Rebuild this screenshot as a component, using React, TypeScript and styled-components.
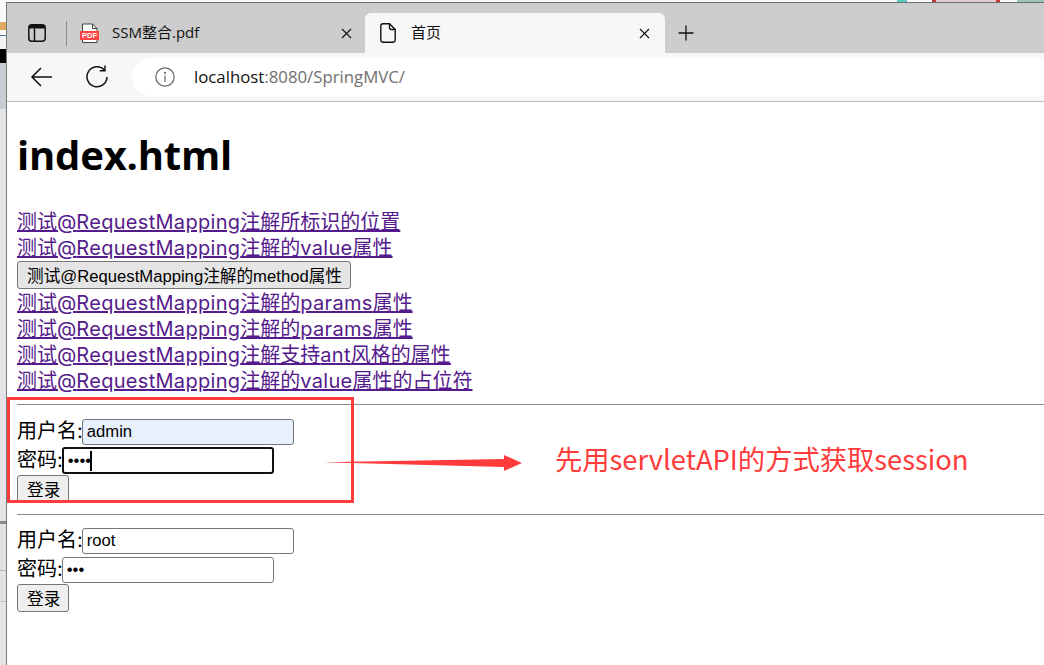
import React from "react";
import styled, { createGlobalStyle } from "styled-components";
import { Plus, X } from "lucide-react";

const GlobalStyle = createGlobalStyle`
  html, body {
    margin: 0;
    padding: 0;
    background: #fff;
  }
`;

const Screen = styled.div`
  position: relative;
  width: 1044px;
  height: 665px;
  overflow: hidden;
  display: flex;
  flex-direction: column;
  background: #fff;
`;

const TopStrip = styled.div`
  height: 2px;
  display: flex;
  background: #fafafa;
`;

const TopPiece = styled.div<{ $w: number; $c: string }>`
  width: ${(p) => p.$w}px;
  background: ${(p) => p.$c};
`;

const Main = styled.div`
  flex: 1;
  display: flex;
  min-height: 0;
`;

const LeftStrip = styled.div`
  width: 6px;
  display: flex;
  flex-direction: column;
  background: #e4e4e6;
`;

const Band = styled.div<{ $h: number; $c: string }>`
  height: ${(p) => p.$h}px;
  background: ${(p) => p.$c};
`;

const Window = styled.div`
  flex: 1;
  min-width: 0;
  display: flex;
  flex-direction: column;
  border-top: 1px solid #6f6f6f;
  border-left: 1px solid #7a7a7a;
  background: #fff;
`;

const TabStrip = styled.div`
  height: 50px;
  display: flex;
  align-items: flex-end;
  background: #cdcdcd;
  padding-left: 21px;
`;

const StripGroup = styled.div`
  height: 40px;
  display: flex;
  align-items: center;
`;

const Separator = styled.div`
  width: 1px;
  height: 25px;
  margin: 0 13px 0 20px;
  background: #8c8c8c;
`;

const TabTitle = styled.span`
  font: 15px "Open Sans", "Noto Sans CJK SC", sans-serif;
  color: #111;
  margin-left: 13px;
  padding-bottom: 3px;
  width: 226px;
  white-space: nowrap;
`;

const ActiveTab = styled.div`
  width: 300px;
  height: 40px;
  margin-left: 10px;
  box-sizing: border-box;
  padding: 0 12px 0 15px;
  display: flex;
  align-items: center;
  background: #f7f7f7;
  border-radius: 6px 6px 0 0;
`;

const ActiveTitle = styled(TabTitle)`
  flex: 1;
  width: auto;
  margin-left: 15px;
`;

const NewTab = styled.div`
  height: 40px;
  margin-left: 9px;
  display: flex;
  align-items: center;
  color: #111;
`;

const Toolbar = styled.div`
  height: 48px;
  display: flex;
  align-items: center;
  background: #f7f7f7;
  border-bottom: 1px solid #bdbdbd;
  padding-left: 23px;
`;

const ToolIcon = styled.div`
  width: 24px;
  height: 24px;
  margin-right: 31px;
  color: #111;
`;

const AddressBar = styled.div`
  flex: 1;
  height: 38px;
  margin-left: -8px;
  display: flex;
  align-items: center;
  background: #fff;
  border-radius: 19px 0 0 19px;
  padding-left: 23px;
`;

const Url = styled.div`
  margin-left: 19px;
  padding-bottom: 1px;
  font: 16.8px "Open Sans", sans-serif;
  color: #6f6f6f;
  white-space: nowrap;
`;

const Host = styled.span`
  color: #111;
`;

const Page = styled.div`
  flex: 1;
  padding: 0 0 0 10px;
  font: 20px/26px "Inter", "Noto Sans CJK SC", sans-serif;
  color: #000;
`;

const Title = styled.h1`
  margin: 26px 0 28px;
  font: bold 40px/54px "Open Sans", "Noto Sans CJK SC", sans-serif;
  letter-spacing: -0.2px;
`;

const PageLink = styled.a`
  display: block;
  height: 26px;
  line-height: 24px;
  color: #551a8b;
  text-decoration: underline;
  white-space: nowrap;
`;

const Latin = styled.span`
  letter-spacing: 0.3px;
`;

const NativeButton = styled.button`
  display: block;
  box-sizing: border-box;
  height: 28px;
  padding: 0 9px;
  font: 16.67px "Liberation Sans", "Noto Sans CJK SC", sans-serif;
  color: #000;
  background: #efefef;
  border: 1px solid #767676;
  border-radius: 3px;
  white-space: nowrap;
`;

const MethodButton = styled(NativeButton)`
  width: 334px;
  background: #e5e5e5;
  margin: -1px 0 2px;
`;

const Rule = styled.hr<{ $top: number; $bottom: number }>`
  height: 0;
  margin: ${(p) => p.$top}px 0 ${(p) => p.$bottom}px;
  border: 0;
  border-top: 1px solid #8c8c8c;
`;

const FormRow = styled.div`
  display: flex;
  align-items: center;
  height: 29px;
  white-space: nowrap;
`;

const FieldLabel = styled.span`
  margin-bottom: 2px;
`;

const Field = styled.input<{ $focused?: boolean; $fill?: boolean }>`
  box-sizing: border-box;
  width: 212px;
  height: ${(p) => (p.$focused ? 27 : 26)}px;
  margin-left: -1px;
  padding: 0 4px;
  font: 16.67px "Liberation Sans", sans-serif;
  color: #000;
  outline: none;
  background: ${(p) => (p.$fill ? "#e8f0fe" : "#fff")};
  border: ${(p) => (p.$focused ? "2px solid #111" : "1px solid #767676")};
  border-radius: 3px;
`;

const FieldBox = styled.div`
  position: relative;
  display: flex;
`;

const Caret = styled.div`
  position: absolute;
  left: 27px;
  top: 4px;
  width: 2px;
  height: 20px;
  background: #000;
`;

const LoginButton = styled(NativeButton)`
  width: 52px;
`;

const RedBox = styled.div`
  position: absolute;
  left: 7px;
  top: 397px;
  width: 347px;
  height: 106px;
  box-sizing: border-box;
  border: 3px solid #ff3b3b;
`;

const ArrowMark = styled.svg`
  position: absolute;
  left: 320px;
  top: 450px;
`;

const Note = styled.div`
  position: absolute;
  left: 555px;
  top: 438px;
  font: 27.3px/40px "Noto Sans CJK SC", sans-serif;
  color: #ff3b3b;
  white-space: nowrap;
`;

const linkTexts = [
  "测试@RequestMapping注解所标识的位置",
  "测试@RequestMapping注解的value属性",
];

const moreLinks = [
  "测试@RequestMapping注解的params属性",
  "测试@RequestMapping注解的params属性",
  "测试@RequestMapping注解支持ant风格的属性",
  "测试@RequestMapping注解的value属性的占位符",
];

// latin runs sit a little tighter in Inter than in the screenshot
function LinkText({ text }: { text: string }) {
  return (
    <PageLink href="#">
      {text.split(/([A-Za-z]+)/).map((part, i) =>
        i % 2 === 1 ? <Latin key={i}>{part}</Latin> : part
      )}
    </PageLink>
  );
}

function SidebarIcon() {
  return (
    <svg width="18" height="18" viewBox="0 0 18 18">
      <rect x="0.8" y="0.8" width="16.4" height="16.4" rx="3" fill="none" stroke="#111" strokeWidth="1.5" />
      <path d="M1 4.5V3a2 2 0 0 1 2-2h12a2 2 0 0 1 2 2v1.5z" fill="#111" />
      <path d="M6.5 4.5V17" stroke="#111" strokeWidth="1.5" />
    </svg>
  );
}

function PdfIcon() {
  return (
    <svg width="19" height="20" viewBox="0 0 19 20">
      <path d="M2.5 9V1h10l4.5 4.5V9M2.5 16.5V19.5H17V16.5" fill="#fff" stroke="#444" strokeWidth="1" />
      <path d="M12.5 1v4.5H17" fill="none" stroke="#444" strokeWidth="1" />
      <rect x="0" y="8" width="19" height="9" fill="#f44" />
      <text x="9.5" y="15.2" textAnchor="middle" fontFamily="Liberation Sans" fontWeight="bold" fontSize="7.5" fill="#fff">
        PDF
      </text>
    </svg>
  );
}

function FileIcon() {
  return (
    <svg width="16" height="20" viewBox="0 0 16 20" fill="none" stroke="#111" strokeWidth="1.4">
      <path d="M3 .8h6.5l5.7 5.7V17a2.2 2.2 0 0 1-2.2 2.2H3A2.2 2.2 0 0 1 .8 17V3A2.2 2.2 0 0 1 3 .8z" />
      <path d="M9.5 .8V4.5a2 2 0 0 0 2 2h3.7" />
    </svg>
  );
}

function BackIcon() {
  return (
    <svg width="24" height="24" viewBox="0 0 24 24" fill="none" stroke="#111" strokeWidth="1.5">
      <path d="M22 12H2M11 3l-9 9 9 9" />
    </svg>
  );
}

function ReloadIcon() {
  return (
    <svg width="24" height="24" viewBox="0 0 24 24" fill="none" stroke="#111" strokeWidth="1.5">
      <path d="M19.5 5.2A10 10 0 1 0 22 12" />
      <path d="M20 0.5v5.2h-5.2" />
    </svg>
  );
}

function InfoIcon() {
  return (
    <svg width="20" height="20" viewBox="0 0 20 20" fill="none" stroke="#666" strokeWidth="1.2">
      <circle cx="10" cy="10" r="9.2" />
      <path d="M10 8.5V15" />
      <circle cx="10" cy="5.8" r="0.5" fill="#666" />
    </svg>
  );
}

function LoginForm(props: {
  user: string;
  pass: string;
  filled?: boolean;
  focused?: boolean;
}) {
  const { user, pass, filled, focused } = props;
  return (
    <form>
      <FormRow>
        <FieldLabel>用户名:</FieldLabel>
        <Field type="text" readOnly value={user} $fill={filled} />
      </FormRow>
      <FormRow>
        <FieldLabel>密码:</FieldLabel>
        <FieldBox>
          <Field type="password" readOnly value={pass} $focused={focused} />
          {focused && <Caret />}
        </FieldBox>
      </FormRow>
      <LoginButton type="button">登录</LoginButton>
    </form>
  );
}

export default function App() {
  return (
    <Screen>
      <GlobalStyle />
      <TopStrip>
        <TopPiece $w={897} $c="#fafafa" />
        <TopPiece $w={10} $c="#5cc9c0" />
        <TopPiece $w={25} $c="#fafafa" />
        <TopPiece $w={4} $c="#c43a3a" />
        <TopPiece $w={60} $c="#e3cfcd" />
        <TopPiece $w={4} $c="#c43a3a" />
        <TopPiece $w={17} $c="#fafafa" />
        <TopPiece $w={27} $c="#9cc4bd" />
      </TopStrip>
      <Main>
        <LeftStrip>
          <Band $h={20} $c="#fafafa" />
          <Band $h={8} $c="#e0a860" />
          <Band $h={5} $c="#fafafa" />
          <Band $h={1} $c="#5a6fb0" />
          <Band $h={13} $c="#f4f4f4" />
          <Band $h={14} $c="#000" />
          <Band $h={46} $c="#c8ccd4" />
          <Band $h={412} $c="#e4e4e6" />
          <Band $h={3} $c="#8a8a8a" />
          <Band $h={46} $c="#e2e2e2" />
          <Band $h={1} $c="#b8b8b8" />
          <Band $h={30} $c="#e2e2e2" />
          <Band $h={1} $c="#c0c0c0" />
        </LeftStrip>
        <Window>
          <TabStrip>
            <StripGroup>
              <SidebarIcon />
              <Separator />
              <PdfIcon />
              <TabTitle>SSM整合.pdf</TabTitle>
              <X size={17} color="#111" strokeWidth={1.6} />
            </StripGroup>
            <ActiveTab>
              <FileIcon />
              <ActiveTitle>首页</ActiveTitle>
              <X size={17} color="#111" strokeWidth={1.6} />
            </ActiveTab>
            <NewTab>
              <Plus size={24} strokeWidth={1.3} />
            </NewTab>
          </TabStrip>
          <Toolbar>
            <ToolIcon>
              <BackIcon />
            </ToolIcon>
            <ToolIcon>
              <ReloadIcon />
            </ToolIcon>
            <AddressBar>
              <InfoIcon />
              <Url>
                <Host>localhost</Host>:8080/SpringMVC/
              </Url>
            </AddressBar>
          </Toolbar>
          <Page>
            <Title>index.html</Title>
            {linkTexts.map((text) => (
              <LinkText key={text} text={text} />
            ))}
            <MethodButton type="button">测试@RequestMapping注解的method属性</MethodButton>
            {moreLinks.map((text, i) => (
              <LinkText key={i} text={text} />
            ))}
            <Rule $top={9} $bottom={12} />
            <LoginForm user="admin" pass="1234" filled focused />
            <Rule $top={11} $bottom={11} />
            <LoginForm user="root" pass="123" />
          </Page>
        </Window>
      </Main>
      <RedBox />
      <ArrowMark width="204" height="26" viewBox="0 0 204 26">
        <polygon points="3,12.2 184,9 184,5 202,13 184,21 184,17" fill="#ff3b3b" />
      </ArrowMark>
      <Note>先用servletAPI的方式获取session</Note>
    </Screen>
  );
}
